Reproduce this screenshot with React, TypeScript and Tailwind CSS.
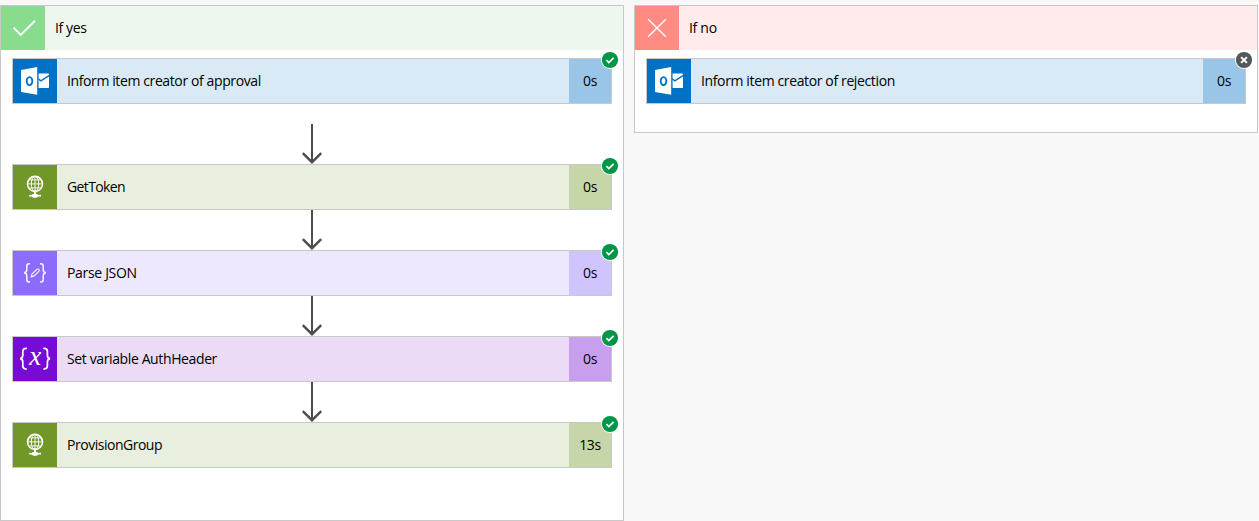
import React from "react";

function OutlookIcon() {
  return (
    <svg width="44" height="44" viewBox="0 0 44 44">
      <path d="M25.6 14.4h9.7q.7 0 .7.7v13.2q0 .7-.7.7h-9.7z" fill="#fff" />
      <path d="M25.2 19.8l2.6 2.1 8.6-5.6" fill="none" stroke="#0072c6" strokeWidth="1.4" />
      <path d="M8 11L24.2 8v27.8L8 33z" fill="#fff" />
      <ellipse cx="16.5" cy="22.1" rx="2.8" ry="4" fill="none" stroke="#0072c6" strokeWidth="1.9" />
    </svg>
  );
}

function GlobeIcon() {
  return (
    <svg width="44" height="44" viewBox="0 0 44 44" fill="none" stroke="#fff">
      <circle cx="22" cy="18.9" r="7.5" strokeWidth="1.6" />
      <ellipse cx="22" cy="18.9" rx="3.7" ry="7.5" strokeWidth="1" />
      <path d="M22 11.5v15M14.5 18.9h15M15.8 14.9h12.4M15.8 22.9h12.4" strokeWidth=".9" />
      <path d="M22 26.5v3" strokeWidth="2" />
      <path d="M16.2 30.7h11.8" strokeWidth="1.7" />
      <ellipse cx="22" cy="30.7" rx="3.3" ry="2" fill="#fff" stroke="none" />
    </svg>
  );
}

function ParseIcon() {
  return (
    <svg width="44" height="44" viewBox="0 0 44 44" fill="none" stroke="#fff" strokeOpacity=".92" strokeWidth="1.5">
      <path d="M17 12.7h-.8q-2.4 0-2.4 2.4v3.5q0 3-2.7 3.2 2.7.2 2.7 3.2v3.4q0 2.5 2.4 2.5h.8" />
      <path d="M27 12.7h.8q2.4 0 2.4 2.4v3.5q0 3 2.7 3.2-2.7.2-2.7 3.2v3.4q0 2.5-2.4 2.5H27" />
      <path d="M18.2 25.8l.9-3 5-4.5q1.2-.7 1.9.1.7.8-.2 1.9l-4.7 4.6z" strokeWidth="1.1" />
    </svg>
  );
}

function VariableIcon() {
  return (
    <svg width="44" height="44" viewBox="0 0 44 44" fill="none" stroke="#fff" strokeLinecap="round">
      <path d="M13.2 11.4q-3.4 0-3.4 3.2v3.7q0 3.2-2.7 3.4 2.7.2 2.7 3.4v3.7q0 3.2 3.4 3.2" strokeWidth="1.7" />
      <path d="M31 11.4q3.4 0 3.4 3.2v3.7q0 3.2 2.7 3.4-2.7.2-2.7 3.4v3.7q0 3.2-3.4 3.2" strokeWidth="1.7" />
      <text
        x="22.2"
        y="27.8"
        textAnchor="middle"
        fill="#fff"
        stroke="none"
        className="font-['Liberation_Serif',serif] text-[27px] italic"
      >
        x
      </text>
    </svg>
  );
}

function Badge({ ok }: { ok: boolean }) {
  return (
    <svg className="absolute -top-[8px] -right-[8px]" width="18" height="18" viewBox="0 0 18 18" fill="none">
      <circle cx="9" cy="9" r="9" fill="#fff" />
      <circle cx="9" cy="9" r="8.1" fill={ok ? "#009648" : "#54565a"} />
      {ok ? (
        <path d="M5.4 9.2l2.4 2.4 4.8-4.8" stroke="#fff" strokeWidth="1.7" />
      ) : (
        <path d="M6.1 6.1l5.8 5.8M11.9 6.1l-5.8 5.8" stroke="#fff" strokeWidth="2" />
      )}
    </svg>
  );
}

function Arrow() {
  return (
    <svg className="mx-auto block" width="22" height="40" viewBox="0 0 22 40" fill="none" stroke="#4d4d4d">
      <path d="M11 0v38" strokeWidth="2" />
      <path d="M1.8 29.2l9.2 9 9.2-9" strokeWidth="2.4" />
    </svg>
  );
}

interface CardProps {
  label: string;
  labelClass: string;
  time: string;
  iconBg: string;
  bg: string;
  timeBg: string;
  icon: React.ReactNode;
  ok?: boolean;
}

function Card({ label, labelClass, time, iconBg, bg, timeBg, icon, ok = true }: CardProps) {
  return (
    <div className={`relative flex h-[46px] w-[600px] border border-[#c8c8c8] ${bg}`}>
      <div className={`h-11 w-11 shrink-0 ${iconBg}`}>{icon}</div>
      <div className="flex flex-1 items-center pl-[10px]">
        <span className={labelClass}>{label}</span>
      </div>
      <div className={`flex w-[42px] items-center justify-center ${timeBg}`}>
        <span className="tracking-[-0.4px]">{time}</span>
      </div>
      <Badge ok={ok} />
    </div>
  );
}

const outlook = { iconBg: "bg-[#0072c6]", bg: "bg-[#d9eaf6]", timeBg: "bg-[#99c6e8]", icon: <OutlookIcon /> };
const http = { iconBg: "bg-[#709727]", bg: "bg-[#e8efdf]", timeBg: "bg-[#c6d6a9]", icon: <GlobeIcon /> };

export default function App() {
  return (
    <div className="flex h-[521px] w-[1259px] items-start gap-[10px] overflow-hidden bg-[#f8f8f8] pt-[5px] font-['Open_Sans','Noto_Sans',sans-serif] text-[14px] leading-[20px] text-black">
      <section className="h-[516px] w-[624px] shrink-0 border border-[#c8c8c8] bg-white">
        <header className="flex h-11 items-center bg-[#edf7ee]">
          <svg className="h-11 w-11 bg-[#89dc8d]" viewBox="0 0 44 44" fill="none" stroke="#fff" strokeWidth="1.9">
            <path d="M12.5 21.7l7.2 7.2L34 14.8" />
          </svg>
          <span className="ml-[10px] tracking-[-0.4px]">If yes</span>
        </header>
        <div className="flex flex-col px-[11px] pt-2">
          <Card {...outlook} label="Inform item creator of approval" labelClass="tracking-[-0.39px]" time="0s" />
          <div className="h-[60px] pt-5"><Arrow /></div>
          <Card {...http} label="GetToken" labelClass="tracking-[-0.62px]" time="0s" />
          <Arrow />
          <Card label="Parse JSON" labelClass="tracking-[-0.32px]" time="0s" iconBg="bg-[#8c6cff]" bg="bg-[#eee8ff]" timeBg="bg-[#d0c4ff]" icon={<ParseIcon />} />
          <Arrow />
          <Card label="Set variable AuthHeader" labelClass="tracking-[-0.38px]" time="0s" iconBg="bg-[#770bd6]" bg="bg-[#ebdbf7]" timeBg="bg-[#c89eef]" icon={<VariableIcon />} />
          <Arrow />
          <Card {...http} label="ProvisionGroup" labelClass="tracking-[-0.48px]" time="13s" />
        </div>
      </section>
      <section className="h-[128px] w-[624px] shrink-0 border border-[#c8c8c8] bg-white">
        <header className="flex h-11 items-center bg-[#ffebeb]">
          <svg className="h-11 w-11 bg-[#ff8b83]" viewBox="0 0 44 44" fill="none" stroke="#fff" strokeWidth="1.4">
            <path d="M13.2 13.2l17.6 17.6M30.8 13.2L13.2 30.8" />
          </svg>
          <span className="ml-[10px] tracking-[-0.3px]">If no</span>
        </header>
        <div className="px-[11px] pt-2">
          <Card {...outlook} label="Inform item creator of rejection" labelClass="tracking-[-0.37px]" time="0s" ok={false} />
        </div>
      </section>
    </div>
  );
}
